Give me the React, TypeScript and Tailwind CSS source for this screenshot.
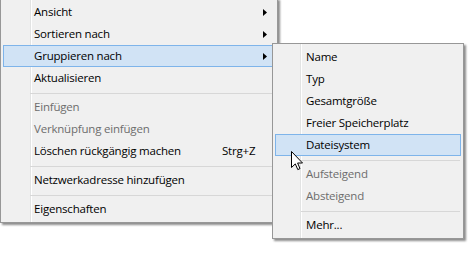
type Entry =
    | { kind: 'item', label: string, disabled?: boolean, arrow?: boolean, shortcut?: string, active?: boolean }
    | { kind: 'sep' }

const mainMenu: Entry[] = [
    { kind: 'item', label: 'Ansicht', arrow: true },
    { kind: 'item', label: 'Sortieren nach', arrow: true },
    { kind: 'item', label: 'Gruppieren nach', arrow: true, active: true },
    { kind: 'item', label: 'Aktualisieren' },
    { kind: 'sep' },
    { kind: 'item', label: 'Einfügen', disabled: true },
    { kind: 'item', label: 'Verknüpfung einfügen', disabled: true },
    { kind: 'item', label: 'Löschen rückgängig machen', shortcut: 'Strg+Z' },
    { kind: 'sep' },
    { kind: 'item', label: 'Netzwerkadresse hinzufügen' },
    { kind: 'sep' },
    { kind: 'item', label: 'Eigenschaften' },
]

const subMenu: Entry[] = [
    { kind: 'item', label: 'Name' },
    { kind: 'item', label: 'Typ' },
    { kind: 'item', label: 'Gesamtgröße' },
    { kind: 'item', label: 'Freier Speicherplatz' },
    { kind: 'item', label: 'Dateisystem', active: true },
    { kind: 'sep' },
    { kind: 'item', label: 'Aufsteigend', disabled: true },
    { kind: 'item', label: 'Absteigend', disabled: true },
    { kind: 'sep' },
    { kind: 'item', label: 'Mehr...' },
]

const Arrow = () => (
    <svg width="4" height="7" viewBox="0 0 4 7" className="ml-auto mr-[7px] shrink-0">
        <path d="M0 0L4 3.5L0 7Z" fill="#000" />
    </svg>
)

const MenuRows = ({ entries, sub }: { entries: Entry[], sub?: boolean }) => (
    <div className="flex flex-col">
        {entries.map((e, i) => e.kind === 'sep' ? (
            <div key={i} className={`h-[7px] pt-[4px] ${sub ? 'pl-[26px] pr-[1px]' : 'pl-[27px] pr-[2px]'}`}>
                <div className="h-px bg-[#d7d7d7]" />
            </div>
        ) : (
            <div
                key={i}
                className={`flex h-[22px] items-center border pl-[30px] ${e.active ? 'border-[#7eb4ea] bg-[#d1e3f5]' : 'border-transparent'} ${e.disabled ? 'text-[#6d6d6d]' : 'text-black'}`}
            >
                <span className={e.shortcut ? 'w-[188px] shrink-0' : ''}>{e.label}</span>
                {e.shortcut && <span>{e.shortcut}</span>}
                {e.arrow && <Arrow />}
            </div>
        ))}
    </div>
)

const Cursor = () => (
    <svg width="13" height="20" viewBox="0 0 13 20" className="absolute left-[291px] top-[151px]">
        <path
            d="M0.5 0.5L0.5 16.5L4.3 12.9L6.8 18.6L9 17.6L6.6 12L11.5 12Z"
            fill="#fff"
            stroke="#000"
            strokeWidth="1"
        />
    </svg>
)

export default function App() {
    return (
        <div className="relative h-[275px] w-[468px] overflow-hidden bg-white font-['Segoe_UI','Open_Sans',sans-serif] text-[11.5px] leading-none tracking-[-0.2px]">
            {/* main context menu */}
            <div className="-mt-[2px] w-[278px] border border-[#979797] bg-[linear-gradient(to_right,#f0f0f0_29px,#e2e3e3_29px,#e2e3e3_30px,#fff_30px,#fff_31px,#f0f0f0_31px)] p-[2px] shadow-[2px_2px_2px_rgba(0,0,0,0.45)]">
                <MenuRows entries={mainMenu} />
            </div>

            {/* Gruppieren nach submenu */}
            <div className="absolute left-[272px] top-[43px] w-[192px] border border-[#979797] bg-[linear-gradient(to_right,#f0f0f0_27px,#e2e3e3_27px,#e2e3e3_28px,#fff_28px,#fff_29px,#f0f0f0_29px)] p-[2px] shadow-[2px_2px_2px_rgba(0,0,0,0.45)]">
                <MenuRows entries={subMenu} sub />
            </div>

            <Cursor />
        </div>
    )
}
